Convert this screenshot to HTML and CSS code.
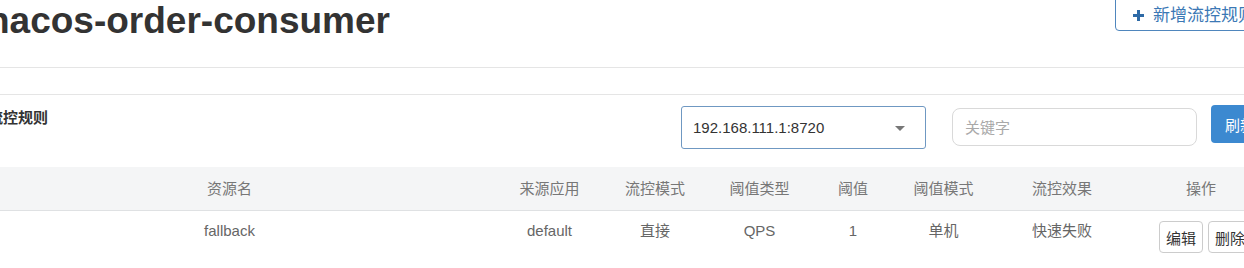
FILE: index.html
```html
<!DOCTYPE html>
<html lang="zh-CN">
<head>
<meta charset="utf-8">
<title>nacos-order-consumer</title>
<link rel="stylesheet" href="styles.css">
</head>
<body>
<div class="page">
  <div class="page-header">
    <h1 class="title">nacos-order-consumer</h1>
    <button class="btn-add" type="button">
      <svg class="plus" width="11" height="11" viewBox="0 0 11 11" aria-hidden="true"><rect x="4" y="0" width="3" height="11"/><rect x="0" y="4" width="11" height="3"/></svg>
      <span>新增流控规则</span>
    </button>
  </div>
  <div class="panel">
    <div class="toolbar">
      <div class="panel-title">流控规则</div>
      <div class="controls">
        <div class="select">
          <span>192.168.111.1:8720</span>
          <span class="caret"></span>
        </div>
        <input class="search" type="text" placeholder="关键字">
        <button class="btn-refresh" type="button">刷新</button>
      </div>
    </div>
    <div class="table">
      <div class="row head">
        <div class="cell"></div>
        <div class="cell">资源名</div>
        <div class="cell">来源应用</div>
        <div class="cell">流控模式</div>
        <div class="cell">阈值类型</div>
        <div class="cell">阈值</div>
        <div class="cell">阈值模式</div>
        <div class="cell">流控效果</div>
        <div class="cell">操作</div>
      </div>
      <div class="row body">
        <div class="cell"></div>
        <div class="cell">fallback</div>
        <div class="cell">default</div>
        <div class="cell">直接</div>
        <div class="cell">QPS</div>
        <div class="cell">1</div>
        <div class="cell">单机</div>
        <div class="cell">快速失败</div>
        <div class="cell ops">
          <button class="btn-sm" type="button">编辑</button>
          <button class="btn-sm" type="button">删除</button>
        </div>
      </div>
    </div>
  </div>
</div>
</body>
</html>
```

FILE: styles.css
```css
html, body {
  margin: 0;
  padding: 0;
  overflow: hidden;
  background: #fff;
}
body {
  font-family: "Liberation Sans", Arial, "Noto Sans CJK SC", sans-serif;
  font-size: 15px;
  color: #333;
}
.page {
  margin-left: -36px;
  width: 1308px;
}
.page-header {
  display: flex;
  justify-content: space-between;
  align-items: flex-start;
  height: 67px;
  border-bottom: 1px solid #e5e5e5;
}
.title {
  margin: 0;
  padding-left: 23px;
  font-size: 37px;
  line-height: 41px;
  font-weight: bold;
  color: #333;
}
.btn-add {
  box-sizing: border-box;
  height: 41px;
  margin-top: -10px;
  padding: 10px 16px 0 17px;
  display: flex;
  align-items: center;
  gap: 9px;
  border: 1px solid #4f86bd;
  border-radius: 4px;
  background: #fff;
  color: #3b78b5;
  font-family: "Liberation Sans", Arial, "Noto Sans CJK SC", sans-serif;
  font-size: 17px;
  line-height: 20px;
}
.plus {
  fill: #2e6aa6;
}
.panel {
  margin-top: 26px;
  border-top: 1px solid #e5e5e5;
}
.toolbar {
  display: flex;
  justify-content: space-between;
  align-items: flex-start;
  height: 72px;
}
.panel-title {
  margin-top: 13px;
  padding-left: 24px;
  font-size: 15px;
  line-height: 20px;
  font-weight: bold;
  color: #333;
}
.controls {
  display: flex;
  align-items: flex-start;
}
.select {
  box-sizing: border-box;
  width: 245px;
  height: 43px;
  margin-top: 11px;
  padding: 0 20px 0 11px;
  display: flex;
  align-items: center;
  justify-content: space-between;
  border: 1px solid #6f98c2;
  border-radius: 3px;
  color: #333;
  font-size: 15px;
}
.caret {
  width: 0;
  height: 0;
  border-left: 5px solid transparent;
  border-right: 5px solid transparent;
  border-top: 5px solid #777;
  margin-top: 1px;
}
.search {
  box-sizing: border-box;
  width: 245px;
  height: 38px;
  margin: 13px 0 0 26px;
  padding: 0 12px;
  border: 1px solid #d9d9d9;
  border-radius: 8px;
  font-family: "Liberation Sans", Arial, "Noto Sans CJK SC", sans-serif;
  font-size: 15px;
  color: #333;
  outline: none;
}
.search::placeholder {
  color: #a9a9a9;
}
.btn-refresh {
  box-sizing: border-box;
  width: 61px;
  height: 38px;
  margin: 10px 0 0 14px;
  padding: 0 0 0 14px;
  text-align: left;
  border: none;
  border-radius: 4px;
  background: #3c89d0;
  color: #fff;
  font-family: "Liberation Sans", Arial, "Noto Sans CJK SC", sans-serif;
  font-size: 15px;
}
.row {
  display: grid;
  grid-template-columns: 0px 531px 109px 102px 107px 80px 101px 136px 142px;
}
.head {
  height: 43px;
  background: #f4f5f6;
  border-bottom: 1px solid #dfe1e3;
  color: #777;
  align-items: center;
}
.body {
  padding-top: 10px;
  height: 42px;
  color: #666;
  align-items: start;
}
.cell {
  text-align: center;
  line-height: 20px;
  white-space: nowrap;
}
.ops {
  display: flex;
  gap: 5px;
  padding-left: 29px;
}
.btn-sm {
  box-sizing: border-box;
  width: 44px;
  height: 32px;
  padding: 0;
  border: 1px solid #ccc;
  border-radius: 4px;
  background: #fff;
  color: #333;
  font-family: "Liberation Sans", Arial, "Noto Sans CJK SC", sans-serif;
  font-size: 15px;
}
```
